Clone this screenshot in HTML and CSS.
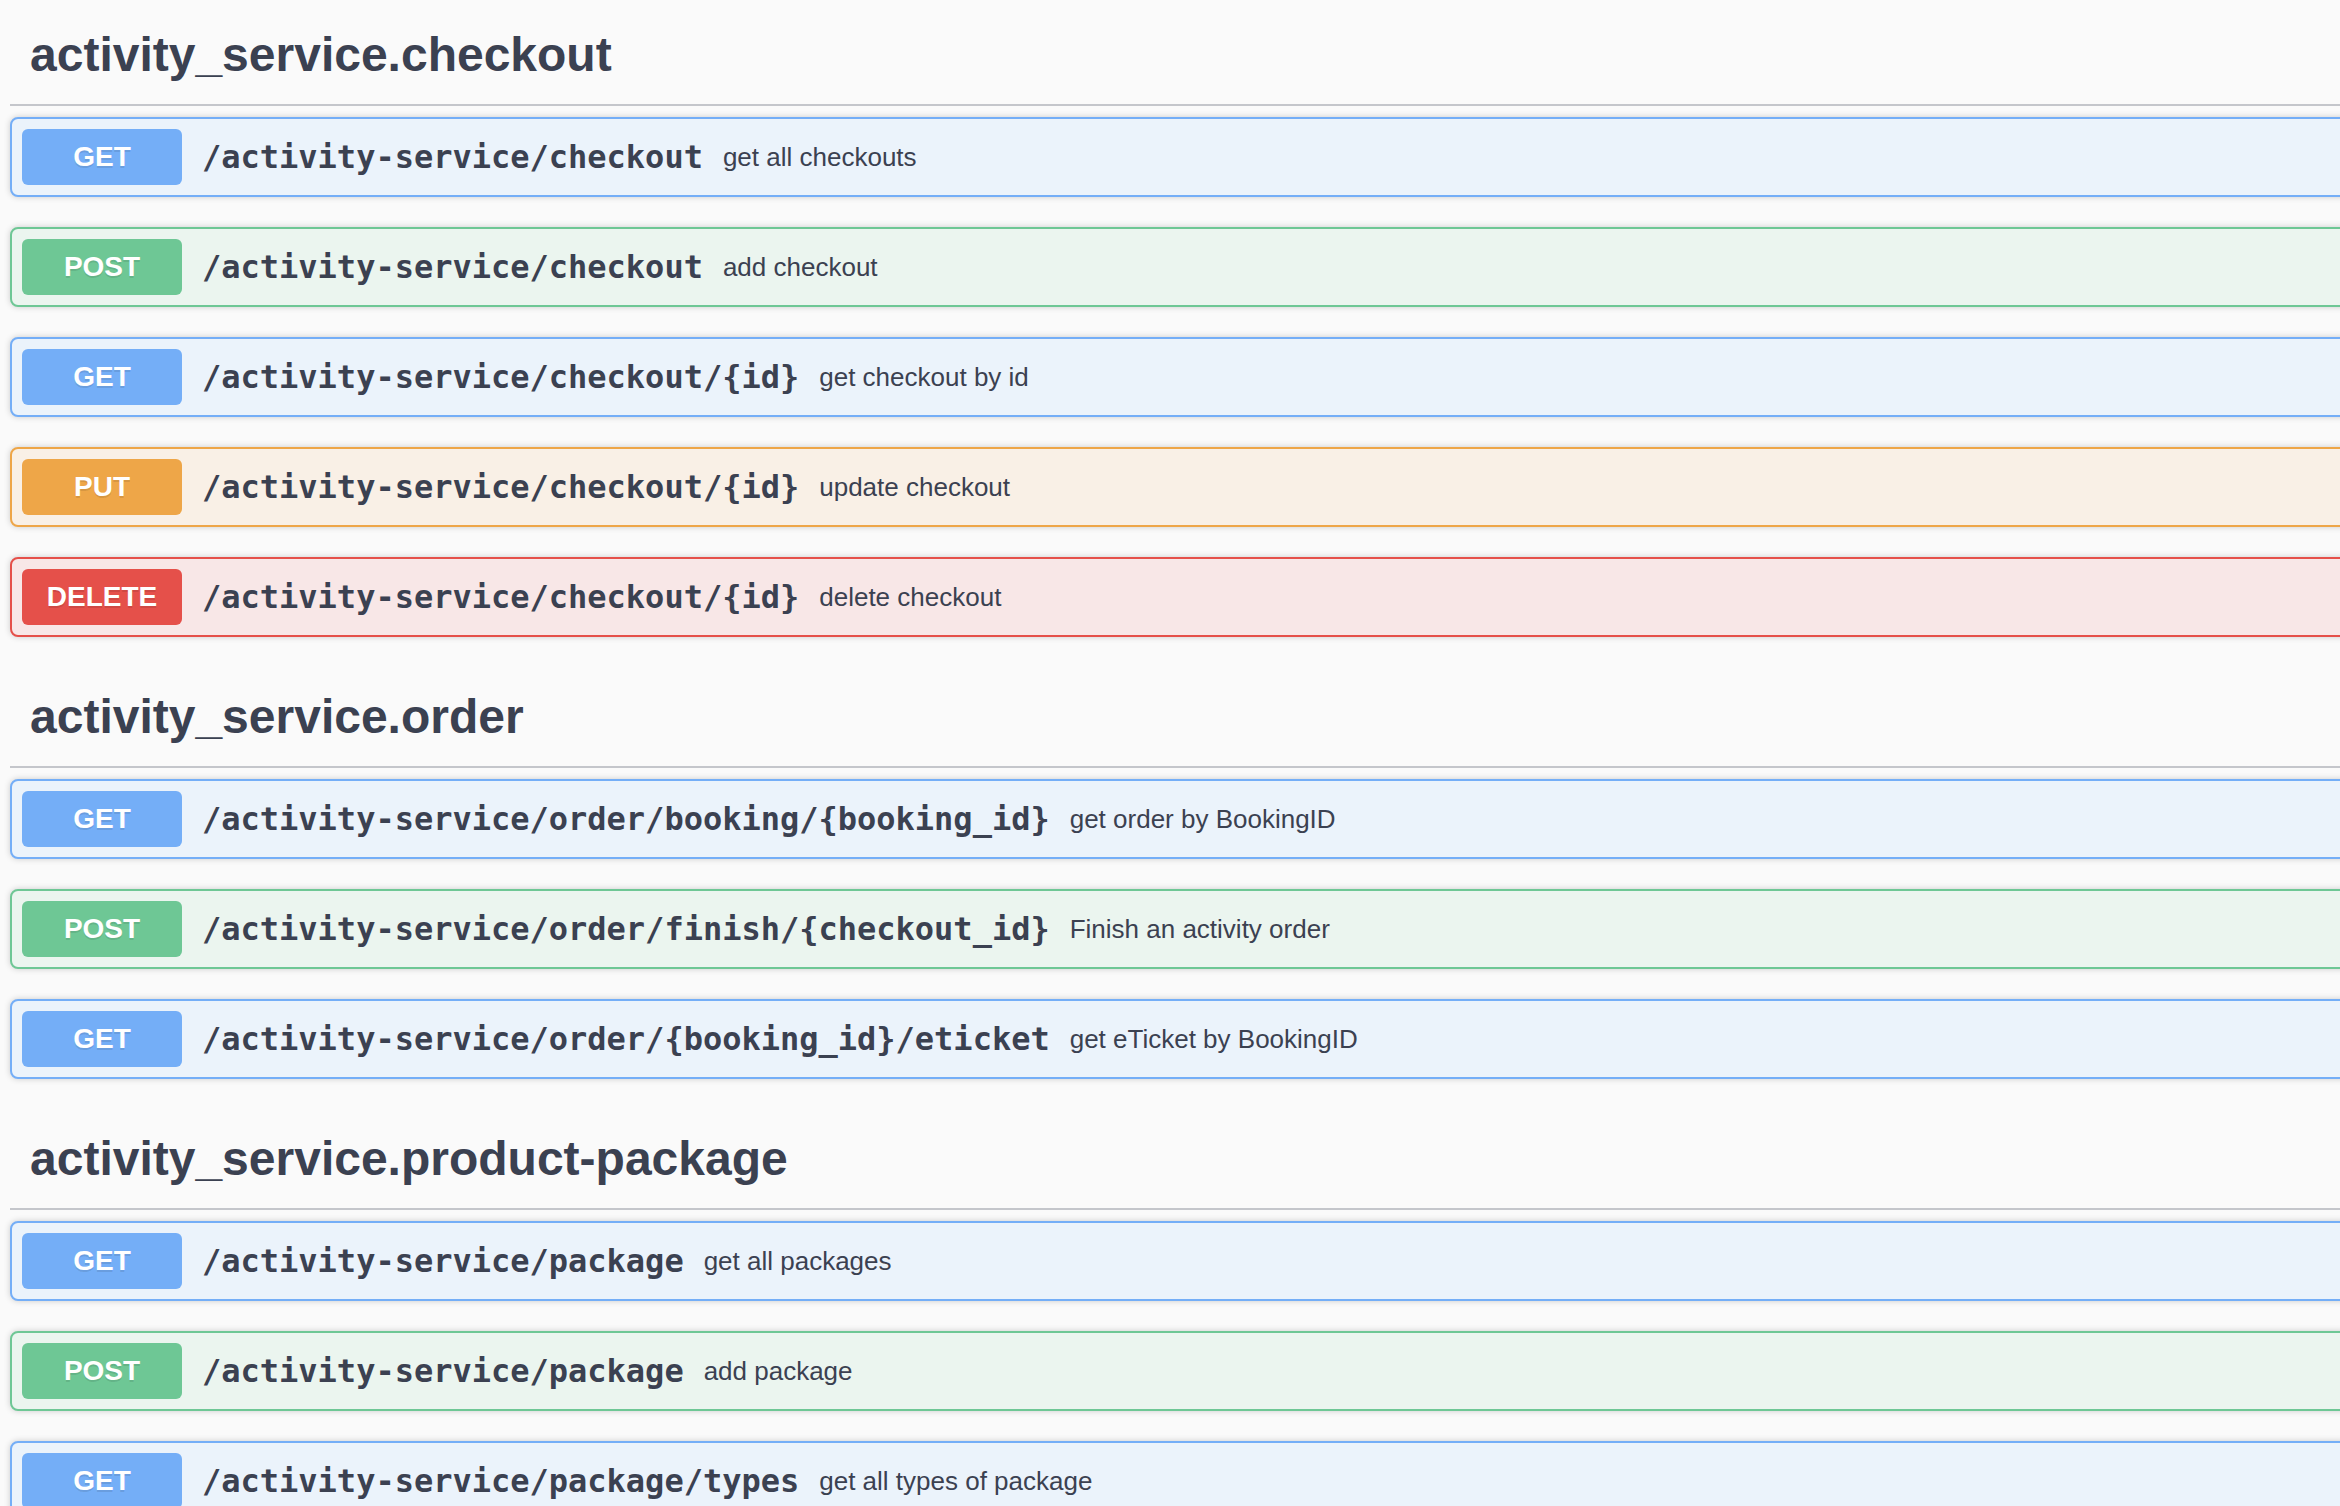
FILE: index.html
```html
<!DOCTYPE html>
<html lang="en">
<head>
<meta charset="utf-8">
<title>activity_service</title>
<link rel="stylesheet" href="styles.css">
</head>
<body>
<div class="wrapper">
  <section class="tag-section">
    <h3 class="tag">activity_service.checkout</h3>
    <div class="opblock get"><div class="summary"><span class="method">GET</span><span class="path">/activity-service/checkout</span><span class="desc">get all checkouts</span></div></div>
    <div class="opblock post"><div class="summary"><span class="method">POST</span><span class="path">/activity-service/checkout</span><span class="desc">add checkout</span></div></div>
    <div class="opblock get"><div class="summary"><span class="method">GET</span><span class="path">/activity-service/checkout/{id}</span><span class="desc">get checkout by id</span></div></div>
    <div class="opblock put"><div class="summary"><span class="method">PUT</span><span class="path">/activity-service/checkout/{id}</span><span class="desc">update checkout</span></div></div>
    <div class="opblock delete"><div class="summary"><span class="method">DELETE</span><span class="path">/activity-service/checkout/{id}</span><span class="desc">delete checkout</span></div></div>
  </section>
  <section class="tag-section">
    <h3 class="tag">activity_service.order</h3>
    <div class="opblock get"><div class="summary"><span class="method">GET</span><span class="path">/activity-service/order/booking/{booking_id}</span><span class="desc">get order by BookingID</span></div></div>
    <div class="opblock post"><div class="summary"><span class="method">POST</span><span class="path">/activity-service/order/finish/{checkout_id}</span><span class="desc">Finish an activity order</span></div></div>
    <div class="opblock get"><div class="summary"><span class="method">GET</span><span class="path">/activity-service/order/{booking_id}/eticket</span><span class="desc">get eTicket by BookingID</span></div></div>
  </section>
  <section class="tag-section">
    <h3 class="tag">activity_service.product-package</h3>
    <div class="opblock get"><div class="summary"><span class="method">GET</span><span class="path">/activity-service/package</span><span class="desc">get all packages</span></div></div>
    <div class="opblock post"><div class="summary"><span class="method">POST</span><span class="path">/activity-service/package</span><span class="desc">add package</span></div></div>
    <div class="opblock get"><div class="summary"><span class="method">GET</span><span class="path">/activity-service/package/types</span><span class="desc">get all types of package</span></div></div>
  </section>
</div>
</body>
</html>
```

FILE: styles.css
```css
html, body {
  margin: 0;
  padding: 0;
  background: #fafafa;
  overflow: hidden;
}

body {
  font-family: "Liberation Sans", Arial, Helvetica, sans-serif;
  color: #3b4151;
}

.wrapper {
  width: 2420px;
  padding: 5px 0 0 10px;
}

.tag-section {
  display: flex;
  flex-direction: column;
}

.tag {
  margin: 0 0 11px;
  padding: 22px 40px 21px 20px;
  font-size: 48px;
  line-height: 56px;
  font-weight: 700;
  color: #3b4151;
  border-bottom: 2px solid #c4c6cb;
}

.opblock {
  margin: 0 0 30px;
  border: 2px solid;
  border-radius: 8px;
  box-shadow: 0 0 6px rgba(0, 0, 0, 0.19);
}

.summary {
  display: flex;
  align-items: center;
  padding: 10px;
}

.method {
  flex: none;
  width: 160px;
  height: 56px;
  display: flex;
  align-items: center;
  justify-content: center;
  border-radius: 6px;
  color: #fff;
  font-size: 28px;
  font-weight: 700;
  text-shadow: 0 2px 0 rgba(0, 0, 0, 0.1);
}

.path {
  padding: 0 20px;
  font-family: "DejaVu Sans Mono", "Liberation Mono", monospace;
  font-size: 32px;
  font-weight: 700;
  color: #3b4151;
}

.desc {
  font-size: 26px;
  color: #3b4151;
}

.get { border-color: #74aef7; background: #ebf3fb; }
.get .method { background: #74aef7; }

.post { border-color: #6ec795; background: #ebf5ef; }
.post .method { background: #6ec795; }

.put { border-color: #eea648; background: #f9f0e6; }
.put .method { background: #eea648; }

.delete { border-color: #e5504a; background: #f8e7e7; }
.delete .method { background: #e5504a; }
```
